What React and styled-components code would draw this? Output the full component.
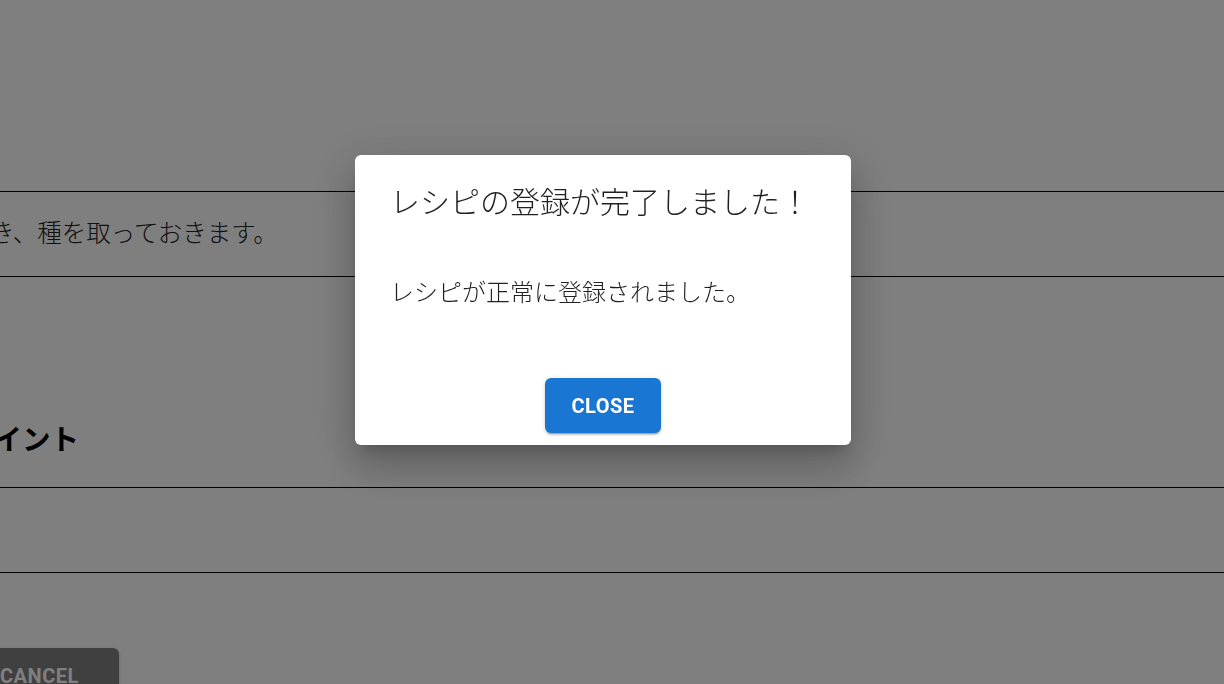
import React from 'react'
import styled, { createGlobalStyle } from 'styled-components'

const GlobalStyle = createGlobalStyle`
  html, body {
    margin: 0;
    padding: 0;
    background: #ffffff;
    overflow: hidden;
    font-family: "Noto Sans CJK JP", "Noto Sans", sans-serif;
  }
`

const Page = styled.div`
  width: 1224px;
  height: 684px;
  overflow: hidden;
  position: relative;
`

const Form = styled.div`
  padding-top: 191px;
  display: flex;
  flex-direction: column;
`

const Row = styled.div`
  height: 84px;
  box-sizing: content-box;
  border-top: 1px solid #000;
  border-bottom: 1px solid #000;
  display: flex;
  align-items: center;
  margin-top: ${props => props.gap || 0}px;
`

const RowText = styled.p`
  margin: 0 0 5px;
  font-size: 24.5px;
  font-weight: 300;
  color: #222;
  white-space: nowrap;
  text-indent: ${props => props.shift}px;
`

const Heading = styled.h2`
  margin: 141px 0 0;
  font-size: 28.5px;
  line-height: 40px;
  font-weight: 700;
  color: #000;
  white-space: nowrap;
  text-indent: ${props => props.shift}px;
`

const GreyButton = styled.button`
  margin-top: 75px;
  margin-left: ${props => props.shift}px;
  align-self: flex-start;
  height: 55px;
  padding: 0 40px 0 36px;
  border: none;
  border-radius: 6px;
  background: #808080;
  color: #fff;
  font-family: Roboto, "Liberation Sans", sans-serif;
  font-weight: 700;
  font-size: 20px;
  letter-spacing: 0.5px;
  box-shadow: 0 3px 1px -2px rgba(0,0,0,0.2), 0 2px 2px 0 rgba(0,0,0,0.14), 0 1px 5px 0 rgba(0,0,0,0.12);
`

const Backdrop = styled.div`
  position: fixed;
  inset: 0;
  background: rgba(0, 0, 0, 0.5);
  display: flex;
  align-items: flex-start;
  padding: 155px 0 0 355px;
`

const Dialog = styled.div`
  width: 496px;
  height: 290px;
  box-sizing: border-box;
  background: #fff;
  border-radius: 6px;
  display: flex;
  flex-direction: column;
  box-shadow: 0px 11px 15px -7px rgba(0,0,0,0.2), 0px 24px 38px 3px rgba(0,0,0,0.14), 0px 9px 46px 8px rgba(0,0,0,0.12);
`

const DialogTitle = styled.h2`
  margin: 0;
  padding: 22px 30px 0 35px;
  font-size: 30px;
  line-height: 46px;
  font-weight: 300;
  color: rgba(0, 0, 0, 0.87);
  white-space: nowrap;
`

const DialogBody = styled.p`
  margin: 50px 0 0;
  padding: 0 35px;
  font-size: 24px;
  line-height: 36px;
  font-weight: 300;
  color: rgba(0, 0, 0, 0.87);
  white-space: nowrap;
`

const Actions = styled.div`
  margin-top: auto;
  padding-bottom: 12px;
  display: flex;
  justify-content: center;
`

const PrimaryButton = styled.button`
  width: 116px;
  height: 55px;
  border: none;
  border-radius: 6px;
  background: #1976d2;
  color: #fff;
  font-family: Roboto, "Liberation Sans", sans-serif;
  font-weight: 700;
  font-size: 20px;
  letter-spacing: 0.5px;
  cursor: pointer;
  box-shadow: 0 3px 1px -2px rgba(0,0,0,0.2), 0 2px 2px 0 rgba(0,0,0,0.14), 0 1px 5px 0 rgba(0,0,0,0.12);
`

const App = () => {
  return (
    <Page>
      <GlobalStyle />
      <Form>
        <Row>
          <RowText shift={-34.5}>除き、種を取っておきます。</RowText>
        </Row>
        <Heading shift={-35}>ポイント</Heading>
        <Row gap={29} />
        <GreyButton shift={-36}>CANCEL</GreyButton>
      </Form>
      <Backdrop>
        <Dialog>
          <DialogTitle>レシピの登録が完了しました！</DialogTitle>
          <DialogBody>レシピが正常に登録されました。</DialogBody>
          <Actions>
            <PrimaryButton>CLOSE</PrimaryButton>
          </Actions>
        </Dialog>
      </Backdrop>
    </Page>
  )
}

export default App
